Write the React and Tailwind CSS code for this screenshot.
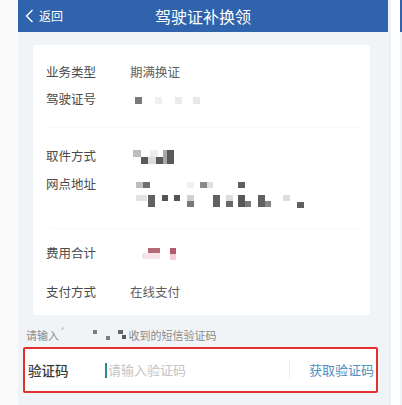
import React from 'react';

const font = { fontFamily: '"Noto Sans CJK SC", "Noto Sans", sans-serif' };

// mosaic blocks: [x, y, w, h, fill]
const licenseBlocks = [
  [5, 3, 7, 7, '#7a7a7a'],
  [25, 3, 7, 7, '#f0f0f0'],
  [45, 3, 7, 7, '#ebebeb'],
  [63, 3, 7, 7, '#e8e8e8'],
];

const pickupBlocks = [
  [3, 0, 8, 7, '#bdbdbd'],
  [20, 0, 8, 7, '#ededed'],
  [11, 7, 7, 7, '#5a5a5a'],
  [18, 7, 8, 7, '#dcdcdc'],
  [26, 7, 7, 7, '#5a5a5a'],
  [33, 0, 4, 14, '#a8a8a8'],
  [37, 0, 7, 14, '#595959'],
];

const addressBlocks = [
  [6, 0, 7, 6, '#bdbdbd'],
  [13, 0, 7, 6, '#6f6f6f'],
  [57, 0, 7, 6, '#f0f0f0'],
  [70, 0, 7, 6, '#8a8a8a'],
  [77, 0, 6, 6, '#dedede'],
  [108, 0, 7, 6, '#5f5f5f'],
  [6, 13, 11, 6, '#e2e2e2'],
  [18, 13, 7, 12, '#616161'],
  [32, 13, 6, 6, '#555'],
  [44, 13, 6, 6, '#555'],
  [57, 13, 7, 6, '#d0d0d0'],
  [57, 19, 7, 6, '#777'],
  [83, 13, 7, 12, '#616161'],
  [96, 13, 7, 6, '#dcdcdc'],
  [96, 19, 7, 6, '#686868'],
  [108, 13, 7, 12, '#585858'],
  [115, 19, 6, 6, '#7a7a7a'],
  [128, 13, 7, 12, '#616161'],
  [135, 19, 6, 6, '#888'],
  [153, 13, 7, 6, '#dedede'],
  [167, 20, 7, 6, '#5f5f5f'],
];

const feeBlocks = [
  [18, 0, 12, 5, '#b46878'],
  [40, 0, 6, 6, '#b05c6e'],
  [12, 5, 18, 6, '#f7e3e7'],
  [40, 6, 6, 6, '#f3cfd6'],
];

const hintBlocks = [
  [0, 1, 4, 4, '#7d7d7d'],
  [13, 7, 4, 4, '#7d7d7d'],
  [25, 1, 5, 4, '#666'],
  [29, 6, 4, 4, '#555'],
];

function Mosaic({ blocks, w, h }) {
  return (
    <svg width={w} height={h} viewBox={`0 0 ${w} ${h}`}>
      {blocks.map(([x, y, bw, bh, fill], i) => (
        <rect key={i} x={x} y={y} width={bw} height={bh} fill={fill} />
      ))}
    </svg>
  );
}

function Row({ label, children, className = '' }) {
  return (
    <div className={`flex items-center h-[27px] ${className}`}>
      <span className="w-[84px] text-[12.5px] text-[#4a4a4a]">{label}</span>
      <div className="flex items-center text-[12.5px] text-[#5e5e5e]">{children}</div>
    </div>
  );
}

export default function App() {
  return (
    <div className="w-[402px] h-[405px] flex bg-white overflow-hidden" style={font}>
      <div className="w-[18px] bg-[#fafafa]" />

      <div className="w-[370px] flex flex-col bg-[#f1f4f6]">
        {/* header */}
        <div className="h-[32px] bg-[#2f64ac] flex items-center relative shrink-0">
          <div className="flex items-center pl-[7px] gap-[5px] text-white">
            <svg width="9" height="14" viewBox="0 0 9 14">
              <polyline points="7.5,1 1.5,7 7.5,13" fill="none" stroke="white" strokeWidth="1.4" />
            </svg>
            <span className="text-[12px] leading-none">返回</span>
          </div>
          <span className="absolute inset-x-0 text-center text-white text-[16px] leading-none pointer-events-none">
            驾驶证补换领
          </span>
        </div>

        {/* info card */}
        <div className="mt-[13px] ml-[15px] w-[337px] h-[270px] bg-white rounded-[2px] pl-[13px] flex flex-col shrink-0">
          <div className="h-[82px] flex flex-col justify-center">
            <Row label="业务类型">期满换证</Row>
            <Row label="驾驶证号">
              <Mosaic blocks={licenseBlocks} w={80} h={12} />
            </Row>
          </div>
          <div className="h-px bg-[#f8f8f8] mr-[10px] ml-[4px]" />
          <div className="h-[100px] pt-[15px] flex flex-col">
            <Row label="取件方式">
              <Mosaic blocks={pickupBlocks} w={50} h={14} />
            </Row>
            <div className="flex items-start">
              <span className="w-[84px] h-[27px] leading-[27px] text-[12.5px] text-[#4a4a4a]">网点地址</span>
              <div className="mt-[12px]">
                <Mosaic blocks={addressBlocks} w={180} h={27} />
              </div>
            </div>
          </div>
          <div className="h-px bg-[#f8f8f8] mr-[10px] ml-[4px]" />
          <div className="flex flex-col pt-[11px]">
            <Row label="费用合计">
              <Mosaic blocks={feeBlocks} w={50} h={12} />
            </Row>
            <Row label="支付方式" className="mt-[12px]">在线支付</Row>
          </div>
        </div>

        {/* hint */}
        <div className="h-[32px] pt-[8px] pl-[8px] flex items-center text-[11px] text-[#8a8a8a] shrink-0">
          <span>请输入</span>
          <span className="text-[9px] text-[#aaa] ml-[1px] mr-[28px] -mt-[6px]">ˊ</span>
          <Mosaic blocks={hintBlocks} w={35} h={12} />
          <span>收到的短信验证码</span>
        </div>

        {/* sms code input */}
        <div className="ml-[5px] w-[355px] h-[46px] border-2 border-[#e2302c] rounded-[2px] bg-white flex items-center shrink-0">
          <span className="w-[80px] pl-[3px] text-[13.5px] font-medium text-[#3a3a3a]">验证码</span>
          <span className="w-[2px] h-[15px] bg-[#2a8c8c] mr-[1px]" />
          <span className="flex-1 text-[13px] text-[#c4c4c4]">请输入验证码</span>
          <span className="w-px h-[18px] bg-[#ececec] mr-[19px]" />
          <span className="text-[13px] text-[#4d8fc3] pr-[2px]">获取验证码</span>
        </div>
      </div>

      <div className="flex flex-1">
        <div className="w-[3px] bg-[#eef1f3]" />
        <div className="w-[9px] bg-white" />
        <div className="flex-1 flex flex-col">
          <div className="h-[32px] bg-[#2f64ac]" />
          <div className="flex-1 bg-[#f1f4f6]" />
        </div>
      </div>
    </div>
  );
}
